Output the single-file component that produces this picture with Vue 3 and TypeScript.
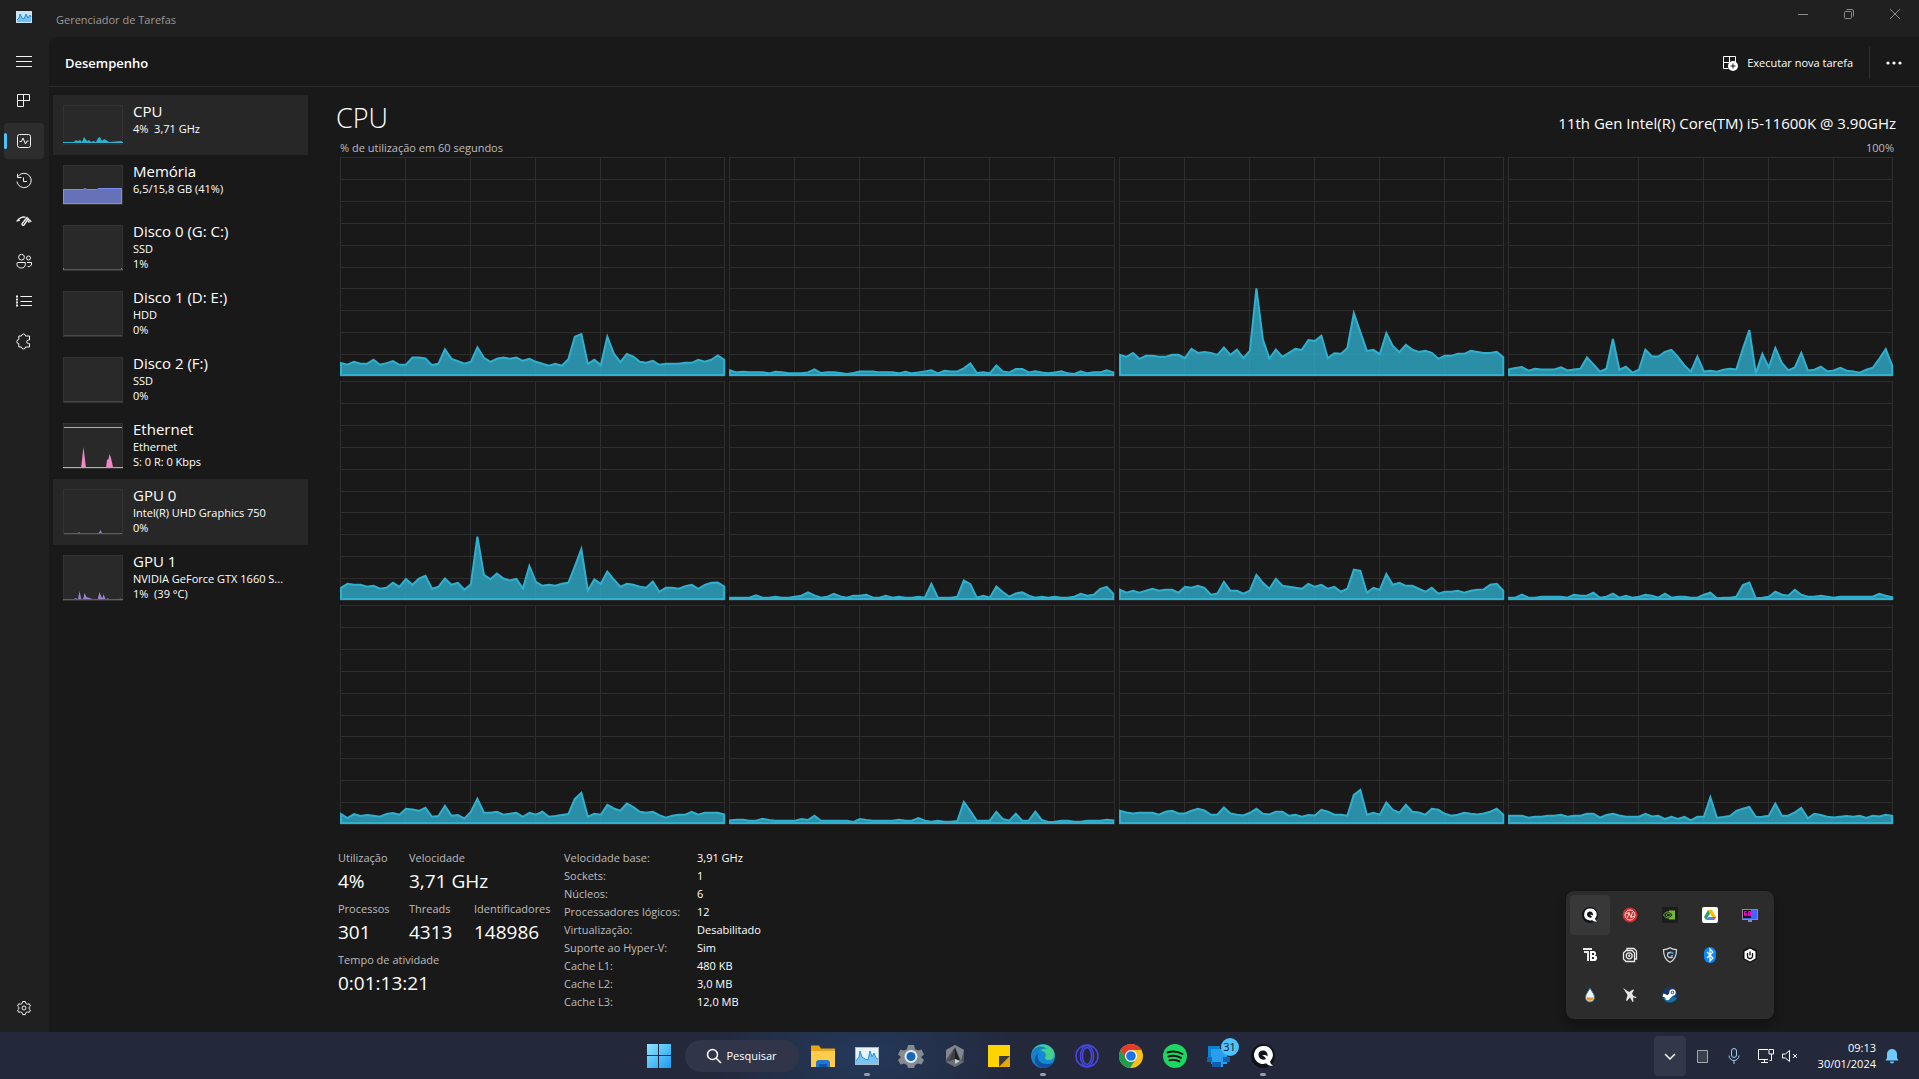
<script setup lang="ts">
interface Icon {
  name: string
  body: string
}

interface Device {
  name: string
  lines: string[]
  height: number
  color: string
  fill: string
  area: string
  line: string
  active?: boolean
  hover?: boolean
}

const navIcons: Icon[] = [
  { name: 'Menu', body: '<path d="M0 3.500h16M0 8.500h16M0 13.500h16"/>' },
  { name: 'Processos', body: '<path d="M1.500 1.500h12v6h-12zM1.500 7.500v6h6v-12M7.500 7.500h6"/>' },
  { name: 'Desempenho', body: '<rect x="1.500" y="1.500" width="13" height="13" rx="2"/><path d="M3.500 8.500h2l1.500-3.500 2.500 6 1.500-3h1.500"/>' },
  { name: 'Histórico de aplicativos', body: '<path d="M2.200 3.200A7.200 7.200 0 1 1 .9 8.600M1.500.8v3.700h4M7.500 4.500V8.500H11"/>' },
  { name: 'Aplicativos de inicialização', body: '<path d="M.7 8.500C3 4.500 7 3.500 9.500 4.300M12.700 5.200 8 12a1.200 1.200 0 0 1-2-1.200L11.500 4M12.500 6.200l2.800 2.600M12 8l1.500 1.500M2 6.500l1.500 1.500" stroke-width="1.400"/>' },
  { name: 'Usuários', body: '<circle cx="5.500" cy="4.200" r="2.900"/><circle cx="12.500" cy="5" r="2"/><path d="M1.500 9.500h7.800v2.200c0 2-1.700 3.300-3.900 3.300S1 13.700 1 11.500V10zM11 9.500h4.500v1.500c0 1.800-1.500 2.800-3.800 2.600"/>' },
  { name: 'Detalhes', body: '<path d="M4.500 3.500H16M4.500 8.500H16M4.500 12.500H16"/><path d="M0 3.500h2M0 6.500h2M0 9.500h2M0 12.500h2" stroke-width="2"/>' },
  { name: 'Serviços', body: '<path d="M5.500 3a2 2 0 0 1 4 0h4v4h-1a1.800 1.800 0 0 0 0 3.600h1v3.400h-4a2 2 0 0 1-4 0H2.800v-3.400a2 2 0 0 1 0-4V3z"/>' },
]

const settingsBody =
  '<circle cx="8" cy="8" r="2"/><path d="M6.700 1.500h2.600l.5 1.900 1.500.9 1.900-.6 1.300 2.300-1.400 1.300v1.500l1.400 1.300-1.300 2.300-1.900-.6-1.500.9-.5 1.900H6.700l-.5-1.900-1.500-.9-1.900.6-1.300-2.300 1.400-1.300V7.300L1.500 6l1.300-2.300 1.900.6 1.500-.9z"/>'

const devices: Device[] = [
  { name: 'CPU', lines: ['4%  3,71 GHz'], height: 40, color: '#2fb0cf', fill: '#2fb0cf', active: true,
    area: 'M0 38V37H11l2-2 2 1 2-1 2 2 2-5 3 4 2-1 2 2 2-1 3 1 2-4 2-1 2 4 2-2 2 1 3 2 13-1V38z', line: 'M0 37.500H60' },
  { name: 'Memória', lines: ['6,5/15,8 GB (41%)'], height: 40, color: '#7a8cf5', fill: '#6672b8',
    area: 'M0 39V24.500H20l2-1 2 1H34l1-1H59V39z', line: 'M.5 38.500V24.500H20l2-1 2 1H34l1-1H58.500V38.500z' },
  { name: 'Disco 0 (G: C:)', lines: ['SSD', '1%'], height: 46, color: '#266e6b', fill: '#39a5a0', area: 'M0 43h1v2H0zM58 43h1v2h-1z', line: 'M0 44.500H60' },
  { name: 'Disco 1 (D: E:)', lines: ['HDD', '0%'], height: 46, color: '#235652', fill: 'none', area: '', line: 'M1 44.500H59' },
  { name: 'Disco 2 (F:)', lines: ['SSD', '0%'], height: 46, color: '#235652', fill: 'none', area: '', line: 'M1 44.500H59' },
  { name: 'Ethernet', lines: ['Ethernet', 'S: 0 R: 0 Kbps'], height: 46, color: '#f088c6', fill: '#f088c6',
    area: 'M18 45 20.500 24 23 45zM43 45l1-8 1.500-1 1-5 1.500 4 2 9v1z', line: 'M1 4.500H59M0 44.500H60' },
  { name: 'GPU 0', lines: ['Intel(R) UHD Graphics 750', '0%'], height: 46, color: '#655880', fill: '#9b82c8', hover: true,
    area: 'M14 45l2-2 2 2zM35 45l2.500-4 2 4z', line: 'M1 44.500H59' },
  { name: 'GPU 1', lines: ['NVIDIA GeForce GTX 1660 S...', '1%  (39 °C)'], height: 46, color: '#655880', fill: '#9b82c8',
    area: 'M11 45l1-2 3 1 1.500-8 2 9 2-2 1-5 2 4 6 2 2 1h3l2-8 2 5 1 1 1-4 2 5 1 1 1-2 3 2h8l2-2v2z', line: 'M0 44.500H60' },
]

/* Logical processor load over 60 seconds, 660 being a full load. */
const cores: number[][] = [
  [36,31,40,34,34,46,31,36,42,31,31,53,53,50,30,34,78,49,42,34,40,84,52,40,49,53,49,53,43,49,40,34,28,34,28,48,116,124,34,46,30,116,65,39,64,56,40,37,43,31,34,34,34,37,37,46,40,46,59,46],
  [14,8,10,8,8,8,5,10,8,5,5,5,8,17,6,8,8,6,3,6,11,11,11,8,8,8,5,10,5,8,11,14,5,13,11,11,20,35,6,8,5,29,11,8,18,18,8,11,8,5,8,11,5,3,11,5,8,8,14,8],
  [61,55,67,49,58,58,55,55,61,61,51,79,67,70,67,61,83,61,77,51,74,262,107,50,77,55,67,79,76,106,103,119,51,66,64,82,187,130,73,76,63,127,88,69,91,77,70,73,67,49,58,58,64,64,73,70,67,67,70,54],
  [17,21,24,13,19,17,17,17,23,14,17,19,53,32,10,19,109,16,25,7,16,77,56,56,70,76,55,29,10,56,11,13,10,16,19,17,79,136,5,64,23,82,37,14,23,67,14,16,25,11,14,22,13,11,7,16,22,49,78,28],
  [34,46,43,43,37,40,31,34,49,37,61,43,62,70,31,37,62,43,49,28,45,189,73,60,77,62,56,61,32,100,52,40,43,40,46,49,99,151,26,59,46,83,59,37,46,43,37,34,53,22,34,34,31,39,43,31,43,49,50,38],
  [4,4,4,4,11,4,4,7,4,4,7,10,20,11,4,7,16,8,4,10,10,13,4,4,10,4,7,4,4,7,4,46,4,4,4,7,56,45,4,10,4,38,21,7,17,20,10,4,7,4,7,4,4,7,16,10,13,31,37,16],
  [28,19,25,19,25,31,25,28,28,19,37,34,40,34,13,17,52,25,25,16,25,73,49,31,61,40,37,34,31,46,37,43,31,37,22,31,89,85,19,34,28,76,43,49,40,40,31,22,34,16,22,22,25,19,25,28,29,43,46,25],
  [4,4,13,4,4,7,7,7,7,4,13,10,10,19,4,7,16,4,10,4,7,13,10,4,16,4,7,7,4,4,13,19,2,4,4,7,42,50,2,4,7,22,13,10,28,13,7,7,10,7,4,7,7,7,7,7,7,16,10,5],
  [27,15,27,21,24,22,19,27,30,25,43,41,37,46,19,21,52,22,24,13,34,73,31,31,34,25,28,31,19,31,25,34,19,21,24,27,73,91,19,28,25,55,44,37,59,48,34,31,34,24,16,22,25,25,34,25,31,31,31,26],
  [8,10,10,7,7,13,9,7,7,7,7,12,9,22,7,7,7,7,7,3,12,9,7,7,7,7,10,7,7,15,7,4,7,4,4,6,64,36,7,7,7,34,12,7,28,7,7,34,9,3,4,7,7,4,4,7,7,7,10,8],
  [37,32,29,31,31,31,25,34,37,29,29,37,43,38,25,26,47,29,25,23,31,43,28,26,34,34,22,25,19,24,23,40,34,25,25,22,85,100,25,31,25,62,40,31,55,34,32,25,43,40,28,22,25,31,28,26,29,34,43,25],
  [22,22,22,16,19,19,22,22,25,19,22,22,28,28,16,24,28,23,19,19,19,28,20,22,12,19,12,19,8,19,19,78,16,18,21,37,43,49,18,19,22,59,22,22,32,46,14,28,24,19,17,19,21,19,22,15,22,20,25,22],
]

const points = (loads: number[]): string =>
  `0,657 ${loads.map((v, i) => `${i},${657 - v}`).join(' ')} 59,657`

const specs: [string, string][] = [
  ['Velocidade base:', '3,91 GHz'],
  ['Sockets:', '1'],
  ['Núcleos:', '6'],
  ['Processadores lógicos:', '12'],
  ['Virtualização:', 'Desabilitado'],
  ['Suporte ao Hyper-V:', 'Sim'],
  ['Cache L1:', '480 KB'],
  ['Cache L2:', '3,0 MB'],
  ['Cache L3:', '12,0 MB'],
]

const apps: (Icon & { running?: boolean; badge?: string })[] = [
  { name: 'Explorador de Arquivos', body: '<path d="M0 1.500h8l2 3h14V12H0z" fill="#e8a317"/><path d="M0 7h24v16H0z" fill="#ffcd4b"/><path d="M5 23v-4a3 3 0 0 1 3-3h8a3 3 0 0 1 3 3v4z" fill="#1f78cf"/><path d="M8 20h8v3H8z" fill="#10559f"/>' },
  { name: 'Gerenciador de Tarefas', running: true, body: '<path d="M0 3h24v18H0z" fill="#a9bccb"/><path d="M1 4h22v16H1z" fill="#e9f3fa"/><path d="M1 17l3-4 1-6 2 6 3 2 3 1 2-9 2 6 2-4 2 5 2 1v5H1z" fill="#7bc5f5"/><path d="M1 17l3-4 1-6 2 6 3 2 3 1 2-9 2 6 2-4 2 5 2 1" fill="none" stroke="#1f8fe0"/>' },
  { name: 'Configurações', body: '<path d="M9 1h6l1 4 3 1.500 3.500-1L25 10.500 22 13l3 3-2.500 4.500-3.500-1-3 1.500-1 3H9l-1-3-3-1.500-3.500 1L-1 16l3-3-3-2.500L1.500 5.500l3.500 1L8 5z" fill="#858b93"/><circle cx="12" cy="12.500" r="6.500" fill="#e9edf1"/><circle cx="12" cy="12.500" r="4.500" fill="#1769b5"/>' },
  { name: 'Armoury', body: '<path d="M12 1l9 5v12l-9 5-9-5V6z" fill="#50555c"/><path d="M12 1l9 5-3 11-6-14-9 13V6z" fill="#83888e"/><path d="M12 4l5 13-5-2-6 3z" fill="#1c1f25"/><path d="M12 5v10l-6 2z" fill="#3c4047"/><path d="M3 18l9-3 9 3-9 5z" fill="#6a6f76"/><path d="M12 15l5 2-5 3z" fill="#c9cdd1"/>' },
  { name: 'Notas Autoadesivas', body: '<path d="M1 1h22v11l-11 11H1z" fill="#ffd400"/><path d="M12 12h11L12 23z" fill="#3b3a3c"/><path d="M23 12v11H12z" fill="#e9a800"/>' },
  { name: 'Edge', running: true, body: '<circle cx="12" cy="12" r="12" fill="#1489d4"/><path d="M1 8C4 0 16-3 22 6c3 5 1 10-4 10-4 0-5-2-3-4 1-4-7-9-14-4z" fill="#44cf8c"/><path d="M1 8c2-5 10-8 15-3-5-1-9 1-9 6 0 7 7 11 14 8-5 8-17 5-20-3z" fill="#1680cf"/><path d="M8 9c-4 6 1 12 10 11l4-1c-4 6-12 6-15 3-5-4-4-10 1-13z" fill="#11519f"/>' },
  { name: 'Opera', body: '<g fill="none" stroke="#4b45e8" stroke-width="1.500"><circle cx="12" cy="12" r="11"/><ellipse cx="12" cy="12" rx="6.500" ry="10.500"/><ellipse cx="12" cy="12" rx="4.500" ry="8.500"/></g>' },
  { name: 'Chrome', body: '<circle cx="12" cy="12" r="12" fill="#fbc116"/><path d="M1.600 6A12 12 0 0 1 22.400 6H12l-5 9z" fill="#e33b2e"/><path d="M1.600 6A12 12 0 0 0 11 24l6-9-5 3-5-3z" fill="#209b54"/><circle cx="12" cy="12" r="6" fill="#fff"/><circle cx="12" cy="12" r="4.800" fill="#1a73e8"/>' },
  { name: 'Spotify', body: '<circle cx="12" cy="12" r="12" fill="#1ed760"/><path d="M4.500 8.500c5-1.500 10.500-1 15 1.500M5.500 12.500c4.500-1.200 8.500-.8 12.500 1.300M6.500 16.200c3.500-.9 6.500-.6 10 1.200" fill="none" stroke="#11151a" stroke-width="2" stroke-linecap="round"/>' },
  { name: 'Vincular ao Celular', badge: '31', body: '<path d="M1 2h12v14H1z" fill="#0b83d4"/><path d="M4 5h16v15H4z" fill="#1ea2f0"/><path d="M0 13h23v5H0z" fill="#0c66b4"/><path d="M5 7h11v16H5z" fill="#2a9df0"/><path d="M5 18h9v5H5z" fill="#0f5fae"/>' },
  { name: 'Q', running: true, body: '<circle cx="12" cy="12" r="12" fill="#11131c"/><path d="M12 2a9 9 0 0 0-3 17.500c2 .7 4 .8 6-.2 2 2.200 4 3 7 2.200-1.700-.7-2.500-2-3-4A9 9 0 0 0 12 2zm0 4.500c3.500 0 5 3 4.500 6-1.700-1.700-3.500-1.800-5.500-1 2 .4 3.300 1.600 4 3.500-3.500 2-7.500-.5-7.500-4.500 0-2.500 2-4 4.500-4z" fill="#fff" fill-rule="evenodd"/>' },
]

const trayIcons: Icon[] = [
  { name: 'Q', body: '<circle cx="8" cy="8" r="8" fill="#11131c"/><path d="M8 1.500a6 6 0 0 0-2 11.600c1.500.5 3 .5 4-.2 1.300 1.500 3 2 5 1.500-1.200-.6-1.700-1.500-2-2.800A6 6 0 0 0 8 1.500zm0 3c2.300 0 3.300 2 3 4-1-.9-2-1-3.300-.6 1.100.3 2 1 2.500 2.200C8 11.500 5 10 5 7.300 5 5.600 6.300 4.500 8 4.500z" fill="#fff" fill-rule="evenodd"/>' },
  { name: 'Controle N', body: '<circle cx="8" cy="8" r="7.500" fill="#d32a2c"/><g fill="none" stroke="#f5d9d8"><circle cx="8" cy="8" r="5"/><path d="M5.500 11l1.500-5.500 2 5L10.500 5M3 7l4-1.500M9 10.500l4-1.500"/></g>' },
  { name: 'NVIDIA', body: '<path d="M0 0h16v16H0z" fill="#1c1e1b"/><path d="M7 3.500h6v9H7z" fill="#76b93a"/><path d="M1.500 8C4 3.500 9 4 11 8c-2.500 4-7 4-9.500 0z" fill="#1c1e1b" stroke="#76b93a"/><path d="M4 8c1.500-2 4-2 5 0-1.500 2-3.500 2-5 0z" fill="none" stroke="#76b93a"/>' },
  { name: 'Google Drive', body: '<rect width="16" height="16" rx="2" fill="#fff"/><path d="M6 3h4l4 7h-4z" fill="#fbbc04"/><path d="M6 3l2 3.500L4 13 2 10z" fill="#1ea362"/><path d="M6 10h8l-2 3H4z" fill="#4688f4"/><path d="M11.500 10H14l-2 3z" fill="#ea4335"/>' },
  { name: 'Monitor de quadros', body: '<path d="M0 2h16v11H0z" fill="#8a8d96"/><path d="M1 3h14v9H1z" fill="#4263ff"/><path d="M1 3h8v8H1z" fill="#18101d"/><path d="M4.500 4.500h-2v4h2v-2h-2M6.500 4.500h2v4h-2z" fill="none" stroke="#ff00d8"/><path d="M6 13h4v2H6z" fill="#8a8d96"/>' },
  { name: 'TB', body: '<path d="M1 1h9v2H1zM2 4h4v2H2zM5 4h2v10H5z" fill="#e8e8e8"/><path d="M8 4h4a2.500 2.500 0 0 1 1 4.500A2.800 2.800 0 0 1 12 14H8zm2 2v2h2V6zm0 4v2h2v-2z" fill="#fff" fill-rule="evenodd"/>' },
  { name: 'Gravador', body: '<g fill="none" stroke="#e8e8e8" stroke-width="1.300"><path d="M5 3.500v-2h7l2.500 2.500v8h-2"/><path d="M4 3.500h6l2.500 2.500v8.500H4L1.500 12V6z"/><circle cx="7.200" cy="8.800" r="3"/></g><circle cx="7.200" cy="8.800" r="1.200" fill="#e8e8e8"/>' },
  { name: 'Proteção', body: '<path d="M8 .7c2 1.300 4 1.800 6.500 2 0 6-1.500 10-6.500 12.600C3 12.700 1.500 8.700 1.500 2.700 4 2.500 6 2 8 .7z" fill="#272b2f" stroke="#d8dde0" stroke-width="1.200"/><path d="M10.500 5.500H8a2.500 2.500 0 0 0 0 5h2V8" fill="none" stroke="#c6cdd2" stroke-width="1.300"/><path d="M8 5h3.500v3z" fill="#2294dd"/>' },
  { name: 'Bluetooth', body: '<rect x="2" width="12" height="16" rx="6" fill="#0a84ff"/><path d="M5 5l6 6-3 3V2l3 3-6 6" fill="none" stroke="#fff" stroke-width="1.200"/>' },
  { name: 'iCUE', body: '<path d="M8 0l7 3v9l-7 4-7-4V3z" fill="#101010"/><path d="M8 1.500l5.500 3v7L8 14.500l-5.500-3v-7z" fill="#fff"/><path d="M5.500 6v3a2.500 2.500 0 0 0 5 0V6M8 4.500v4" fill="none" stroke="#111" stroke-width="1.300"/>' },
  { name: 'Rainmeter', body: '<path d="M8 1c2 4 4.500 6 4.500 9.500a4.500 4.500 0 0 1-9 0C3.500 7 6 5 8 1z" fill="#f3f7fa" stroke="#31729a"/><path d="M4.500 10.500c2-1 4 1 7-.5a3.500 3.500 0 0 1-7 .5z" fill="#e59a28"/>' },
  { name: 'Avião', body: '<path d="M1 1l6 4 4-2.500 1 .5-2 3.500 1.500 2.500 3 1-.5 1-3-.5.500 4-1 .5-2.500-4.500L5 14l-1-.5L5.500 8z" fill="#e6e6e6"/>' },
  { name: 'Steam', body: '<circle cx="8" cy="8" r="7.700" fill="#14386f"/><path d="M1 11a7.700 7.700 0 0 0 14 0L8 8z" fill="#166f9f"/><path d="M1 8l5 2 3-3M6 11l4-4" stroke="#fff" stroke-width="3.200"/><circle cx="5.500" cy="11" r="2.200" fill="#fff"/><circle cx="10.500" cy="5.500" r="3.200" fill="#fff"/><circle cx="10.500" cy="5.500" r="1.700" fill="#14386f"/><circle cx="10.500" cy="5.500" r="1" fill="#fff"/>' },
]
</script>

<template>
  <div class="desktop">
    <header class="titlebar">
      <svg class="app-icon" viewBox="0 0 16 12">
        <path d="M0 0h16v12H0z" fill="#cfe4f3" />
        <path d="M1 9l2-2 1-4 2 4 2 1 2-5 2 4 2-3 1 2v5H1z" fill="#74c0f2" />
        <path d="M1 9l2-2 1-4 2 4 2 1 2-5 2 4 2-3 1 2" fill="none" stroke="#1f8fe0" />
      </svg>
      <span class="app-name">Gerenciador de Tarefas</span>
      <div class="window-buttons">
        <button aria-label="Minimizar"><svg viewBox="0 0 10 10"><path d="M0 5.500h10" /></svg></button>
        <button aria-label="Restaurar">
          <svg viewBox="0 0 10 10"><rect x=".5" y="2.500" width="7" height="7" rx="1" /><path d="M2.500.5H8a1.500 1.500 0 0 1 1.500 1.500v5.500" /></svg>
        </button>
        <button aria-label="Fechar"><svg viewBox="0 0 10 10"><path d="M0 0l10 10M10 0L0 10" /></svg></button>
      </div>
    </header>

    <div class="window">
      <nav class="rail">
        <button v-for="icon in navIcons" :key="icon.name" :aria-label="icon.name" :class="{ current: icon.name === 'Desempenho' }">
          <svg viewBox="0 0 16 16" v-html="icon.body"></svg>
        </button>
        <button class="settings" aria-label="Configurações"><svg viewBox="0 0 16 16" v-html="settingsBody"></svg></button>
      </nav>

      <main class="panel">
        <div class="toolbar">
          <h1>Desempenho</h1>
          <button class="run">
            <svg viewBox="0 0 16 16">
              <path d="M1.500 1.500h12v6M1.500 1.500v12h5M1.500 7.500h6v-6" fill="none" stroke="#fff" />
              <circle cx="11" cy="11" r="5" fill="#fff" />
              <path d="M11 8.500v5M8.500 11h5" stroke="#191919" />
            </svg>
            Executar nova tarefa
          </button>
          <button class="more" aria-label="Mais opções">
            <svg viewBox="0 0 16 4"><circle cx="2" cy="2" r="1.600" /><circle cx="8" cy="2" r="1.600" /><circle cx="14" cy="2" r="1.600" /></svg>
          </button>
        </div>

        <div class="content">
          <ul class="devices">
            <li v-for="device in devices" :key="device.name" :class="{ active: device.active, hover: device.hover }">
              <svg class="thumb" width="60" :height="device.height" :viewBox="`0 0 60 ${device.height}`">
                <path :d="device.area" :fill="device.fill" />
                <path :d="device.line" fill="none" :stroke="device.color" />
                <rect x="0.5" y="0.5" width="59" :height="device.height - 1" class="frame" />
              </svg>
              <div class="device-text">
                <h2>{{ device.name }}</h2>
                <p v-for="line in device.lines" :key="line">{{ line }}</p>
              </div>
            </li>
          </ul>

          <section class="details">
            <div class="heading">
              <h2>CPU</h2>
              <span>11th Gen Intel(R) Core(TM) i5-11600K @ 3.90GHz</span>
            </div>
            <div class="scale"><span>% de utilização em 60 segundos</span><span>100%</span></div>

            <div class="charts">
              <svg v-for="(loads, c) in cores" :key="c" viewBox="0 0 59 660" preserveAspectRatio="none">
                <line v-for="n in 5" :key="`v${n}`" :x1="n * 10" :x2="n * 10" y1="0" y2="660" class="grid" />
                <line v-for="n in 9" :key="`h${n}`" x1="0" x2="59" :y1="n * 66" :y2="n * 66" class="grid" />
                <polygon :points="points(loads)" class="load" />
              </svg>
            </div>

            <div class="stats">
              <dl class="live">
                <div><dt>Utilização</dt><dd>4%</dd></div>
                <div class="wide"><dt>Velocidade</dt><dd>3,71 GHz</dd></div>
                <div><dt>Processos</dt><dd>301</dd></div>
                <div><dt>Threads</dt><dd>4313</dd></div>
                <div><dt>Identificadores</dt><dd>148986</dd></div>
                <div class="full"><dt>Tempo de atividade</dt><dd>0:01:13:21</dd></div>
              </dl>
              <table>
                <tbody>
                  <tr v-for="[label, value] in specs" :key="label"><th scope="row">{{ label }}</th><td>{{ value }}</td></tr>
                </tbody>
              </table>
            </div>
          </section>
        </div>
      </main>
    </div>

    <div class="flyout">
      <button v-for="(icon, i) in trayIcons" :key="icon.name" :aria-label="icon.name" :class="{ lit: i === 0 }">
        <svg viewBox="0 0 16 16" v-html="icon.body"></svg>
      </button>
    </div>

    <footer class="taskbar">
      <div class="apps">
        <button class="app" aria-label="Iniciar">
          <svg viewBox="0 0 24 24">
            <defs>
              <linearGradient id="start-fill" x1="0" y1="0" x2="24" y2="24" gradientUnits="userSpaceOnUse">
                <stop offset="0" stop-color="#8be6ff" /><stop offset="1" stop-color="#1c9bf2" />
              </linearGradient>
            </defs>
            <path d="M0 0h11v11H0zM12 0h12v11H12zM0 12h11v12H0zM12 12h12v12H12z" fill="url(#start-fill)" />
          </svg>
        </button>
        <button class="search">
          <svg viewBox="0 0 16 16"><circle cx="6.500" cy="6.500" r="5" /><path d="M10 10l5 5" /></svg>
          Pesquisar
        </button>
        <button v-for="app in apps" :key="app.name" class="app" :class="{ running: app.running }" :aria-label="app.name">
          <svg viewBox="0 0 24 24" v-html="app.body"></svg>
          <span v-if="app.badge" class="badge">{{ app.badge }}</span>
        </button>
      </div>

      <div class="tray">
        <button class="chevron" aria-label="Mostrar ícones ocultos"><svg viewBox="0 0 16 16"><path d="M3 6l5 5 5-5" stroke-width="1.500" /></svg></button>
        <button class="glyph" aria-label="Dispositivo"><svg viewBox="0 0 16 16"><path d="M3.500 2.500h10v12h-10z" fill="#3a3f4e" stroke="#a4a8b1" /></svg></button>
        <button class="glyph" aria-label="Microfone"><svg viewBox="0 0 16 16"><rect x="5.500" y=".5" width="5" height="9" rx="2.500" stroke="#9bd0f5" /><path d="M3 7.500a5 5 0 0 0 10 0M8 12.500V16" stroke="#9bd0f5" /></svg></button>
        <button class="network" aria-label="Rede e volume">
          <svg viewBox="0 0 16 16"><path d="M10 1.500H.5v10H10M3 14.500h7M6.500 12v2.500M11 1.500h4.500V6H11zM13.500 6v6.500h-2" /></svg>
          <svg viewBox="0 0 16 16"><path d="M.5 6v4h3L7.500 13.500v-11L3.500 6zM11 6l4 4M15 6l-4 4" /></svg>
        </button>
        <button class="clock"><span>09:13</span><span>30/01/2024</span></button>
        <button class="bell" aria-label="Notificações"><svg viewBox="0 0 16 16"><path d="M8 1a5 5 0 0 0-5 5v4l-1.500 2.500h13L13 10V6a5 5 0 0 0-5-5zM6 13.500a2 2 0 0 0 4 0z" fill="#6fcbff" stroke="none" /></svg></button>
      </div>
    </footer>
  </div>
</template>

<style>
body {
  margin: 0;
  background: #191919;
}
</style>

<style scoped>
* {
  box-sizing: border-box;
}

.desktop {
  position: relative;
  display: flex;
  flex-direction: column;
  height: 100vh;
  min-height: 760px;
  min-width: 1280px;
  background: #202020;
  color: #fff;
  font: 11px/16px "Open Sans", "Noto Sans", sans-serif;
}

h1,
h2,
p,
ul,
dl,
dd {
  margin: 0;
  padding: 0;
  font-weight: 400;
}

button {
  display: flex;
  align-items: center;
  justify-content: center;
  padding: 0;
  border: 0;
  background: none;
  color: inherit;
  font: inherit;
}

svg {
  flex: none;
  overflow: visible;
}

.titlebar {
  display: flex;
  height: 37px;
  flex: none;
  padding: 0 1px 0 16px;
}

.app-icon {
  width: 16px;
  height: 12px;
  margin-top: 11px;
}

.app-name {
  margin: 12px 0 0 24px;
  color: #9b9b9b;
}

.window-buttons {
  display: flex;
  height: 28px;
  margin-left: auto;
}

.window-buttons button {
  width: 46px;
}

.window-buttons svg {
  width: 10px;
  height: 10px;
  fill: none;
  stroke: #8c8c8c;
}

.window {
  display: flex;
  flex: 1;
  min-height: 0;
}

.rail {
  display: flex;
  flex-direction: column;
  gap: 4px;
  width: 49px;
  padding: 6px 5px 6px 4px;
}

.rail button {
  position: relative;
  height: 36px;
  border-radius: 4px;
}

.rail svg {
  width: 16px;
  height: 16px;
  fill: none;
  stroke: #f2f2f2;
}

.rail .current {
  background: #2d2d2d;
}

.rail .current::before {
  position: absolute;
  top: 10px;
  left: 0;
  width: 3px;
  height: 16px;
  border-radius: 2px;
  background: #4cc2ff;
  content: "";
}

.rail .settings {
  margin-top: auto;
}

.panel {
  display: flex;
  flex: 1;
  flex-direction: column;
  min-width: 0;
  border-top-left-radius: 8px;
  background: #191919;
}

.toolbar {
  display: flex;
  align-items: center;
  height: 50px;
  flex: none;
  padding: 2px 17px 0 16px;
  border-bottom: 1px solid #2c2c2c;
}

.toolbar h1 {
  margin-right: auto;
  font-size: 13px;
  font-weight: 600;
}

.run {
  gap: 9px;
  height: 32px;
  padding-right: 16px;
  border-right: 1px solid #303030;
}

.run svg {
  width: 16px;
  height: 16px;
}

.more {
  width: 32px;
  height: 32px;
  padding-left: 16px;
}

.more svg {
  width: 16px;
  height: 4px;
  fill: #fff;
}

.content {
  display: flex;
  flex: 1;
  min-height: 0;
  padding: 8px 25px 20px 4px;
}

.devices {
  width: 255px;
  flex: none;
  list-style: none;
}

.devices li {
  display: flex;
  gap: 10px;
  padding: 10px;
}

.devices .active,
.devices .hover {
  background: #272727;
}

.thumb {
  background: #292929;
  overflow: hidden;
}

.frame {
  fill: none;
  stroke: #fff;
  stroke-opacity: 0.05;
}

.device-text {
  margin: -4px 0;
  white-space: pre;
}

.device-text h2 {
  font-size: 15px;
  line-height: 20px;
}

.device-text p {
  line-height: 15px;
}

.details {
  display: flex;
  flex: 1;
  flex-direction: column;
  min-width: 0;
  padding-left: 32px;
}

.heading {
  display: flex;
  align-items: center;
  justify-content: space-between;
  height: 45px;
  flex: none;
  margin: 0 -2px 0 -4px;
}

.heading h2 {
  font-size: 27px;
  font-weight: 300;
  line-height: 40px;
}

.heading span {
  padding-top: 10px;
  font-size: 15px;
  line-height: 20px;
}

.scale {
  display: flex;
  justify-content: space-between;
  height: 17px;
  flex: none;
  color: #bdbdbd;
}

.charts {
  display: grid;
  flex: 1;
  grid-template: repeat(3, minmax(0, 1fr)) / repeat(4, minmax(0, 1fr));
  gap: 4px;
  min-height: 0;
  margin-right: 1px;
}

.charts svg {
  width: 100%;
  height: 100%;
  min-height: 0;
  border: 1px solid #2d2d2d;
}

.grid {
  stroke: #2d2d2d;
  shape-rendering: crispEdges;
  vector-effect: non-scaling-stroke;
}

.load {
  fill: #2fb0cf;
  fill-opacity: 0.78;
  stroke: #2fb0cf;
  stroke-width: 2px;
  vector-effect: non-scaling-stroke;
}

.stats {
  display: flex;
  gap: 9px;
  flex: none;
  padding-top: 25px;
  margin-left: -2px;
}

.live {
  display: grid;
  grid-template-columns: 71px 65px 81px;
  align-content: start;
}

.live div {
  height: 51px;
}

.live .wide {
  grid-column: span 2;
}

.live .full {
  grid-column: span 3;
}

dt {
  color: #bdbdbd;
}

.live dd {
  font-size: 19px;
  line-height: 30px;
}

table {
  align-self: flex-start;
  border-collapse: collapse;
}

th,
td {
  height: 18px;
  padding: 0;
  font-weight: 400;
  line-height: 16px;
  text-align: left;
  vertical-align: top;
}

th {
  width: 133px;
  color: #bdbdbd;
  white-space: nowrap;
}

.flyout {
  position: absolute;
  right: 145px;
  bottom: 60px;
  display: grid;
  grid-template-columns: repeat(5, 40px);
  grid-auto-rows: 40px;
  padding: 4px;
  border-radius: 8px;
  background: #2c2c2c;
  box-shadow: 0 0 0 1px #151515, 0 6px 10px #0005;
}

.flyout .lit {
  border-radius: 4px;
  background: #383838;
}

.flyout svg {
  width: 16px;
  height: 16px;
}

.taskbar {
  display: flex;
  align-items: center;
  justify-content: center;
  position: relative;
  height: 47px;
  flex: none;
  padding-left: 2px;
  background: radial-gradient(ellipse 160px 90px at 45% 50%, #24395a, transparent), #23283b;
}

.apps {
  display: flex;
  align-items: center;
}

.app {
  position: relative;
  width: 44px;
  height: 44px;
}

.app svg {
  width: 24px;
  height: 24px;
}

.search {
  gap: 4px;
  width: 114px;
  height: 32px;
  margin: 0 2px 0 4px;
  border-radius: 16px;
  background: #30354a;
}

.search svg {
  width: 16px;
  height: 16px;
  fill: none;
  stroke: #fff;
  stroke-width: 1.5px;
}

.running::after {
  position: absolute;
  bottom: 2px;
  left: 19px;
  width: 6px;
  height: 3px;
  border-radius: 2px;
  background: #9a9da5;
  content: "";
}

.badge {
  position: absolute;
  top: 4px;
  right: 2px;
  width: 18px;
  height: 18px;
  border-radius: 9px;
  background: #4cc2ff;
  color: #10141c;
  line-height: 18px;
}

.tray {
  position: absolute;
  top: 0;
  right: 19px;
  display: flex;
  align-items: center;
  height: 47px;
}

.tray svg {
  width: 16px;
  height: 16px;
  fill: none;
  stroke: #fff;
}

.chevron {
  width: 32px;
  height: 40px;
  border-radius: 4px;
  background: #32374a;
}

.glyph {
  width: 32px;
  height: 40px;
}

.network {
  gap: 8px;
  width: 56px;
  height: 40px;
  margin-right: 12px;
}

.clock {
  flex-direction: column;
  align-items: flex-end;
}

.bell {
  margin-left: 8px;
}
</style>
